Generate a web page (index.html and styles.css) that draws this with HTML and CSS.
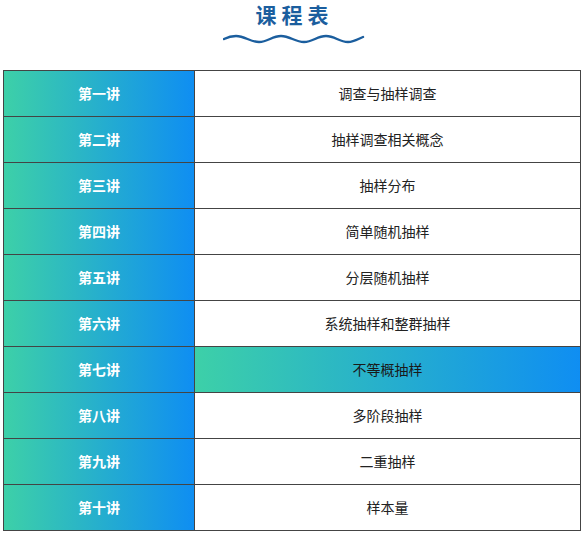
FILE: index.html
```html
<!DOCTYPE html>
<html lang="zh">
<head>
<meta charset="utf-8">
<link rel="stylesheet" href="styles.css">
</head>
<body>
<div class="page">
  <header class="head">
    <h1 class="title">课程表</h1>
    <svg class="wave" width="142" height="14" viewBox="0 0 142 14">
      <path d="M1 8 C5 6 9 5 13 5 C22 5 27 11 36 11 C45 11 49 5 58 5 C67 5 72 11 81 11 C90 11 94 5 103 5 C112 5 116 11 125 11 C131 11 135 8 140 6" fill="none" stroke="#1b5e9e" stroke-width="2.4" stroke-linecap="round"/>
    </svg>
  </header>
  <div class="grid">
    <div class="lec">第一讲</div><div class="topic">调查与抽样调查</div>
    <div class="lec">第二讲</div><div class="topic">抽样调查相关概念</div>
    <div class="lec">第三讲</div><div class="topic">抽样分布</div>
    <div class="lec">第四讲</div><div class="topic">简单随机抽样</div>
    <div class="lec">第五讲</div><div class="topic">分层随机抽样</div>
    <div class="lec">第六讲</div><div class="topic">系统抽样和整群抽样</div>
    <div class="lec">第七讲</div><div class="topic hl">不等概抽样</div>
    <div class="lec">第八讲</div><div class="topic">多阶段抽样</div>
    <div class="lec">第九讲</div><div class="topic">二重抽样</div>
    <div class="lec">第十讲</div><div class="topic">样本量</div>
  </div>
</div>
</body>
</html>
```
FILE: styles.css
```css
* { box-sizing: border-box; }
html, body { margin: 0; padding: 0; background: #fff; }
body { font-family: "Noto Sans CJK SC", "Noto Sans", sans-serif; }
.page { width: 585px; padding: 0 4px 0 3px; }
.head {
  height: 70px;
  display: flex;
  flex-direction: column;
  align-items: center;
}
.title {
  margin: 1px 0 0 0;
  font-size: 21px;
  line-height: 27px;
  font-weight: 700;
  color: #1b5e9e;
  letter-spacing: 5px;
  padding-left: 5px;
}
.wave { display: block; margin-top: 3px; margin-left: 4px; }
.grid {
  display: grid;
  grid-template-columns: 190px 385px;
  grid-auto-rows: 45px;
  gap: 1px;
  padding: 1px;
  background: #444;
  width: 578px;
}
.lec, .topic {
  display: flex;
  align-items: center;
  justify-content: center;
  font-size: 14px;
  padding-bottom: 2px;
}
.lec {
  background: linear-gradient(to right, #3dd0a8, #0f8ef2);
  color: #fff;
  font-weight: 700;
}
.topic { background: #fff; color: #222; }
.topic.hl { background: linear-gradient(to right, #3dd0a8, #0f8ef2); color: #1a1a1a; }
```
